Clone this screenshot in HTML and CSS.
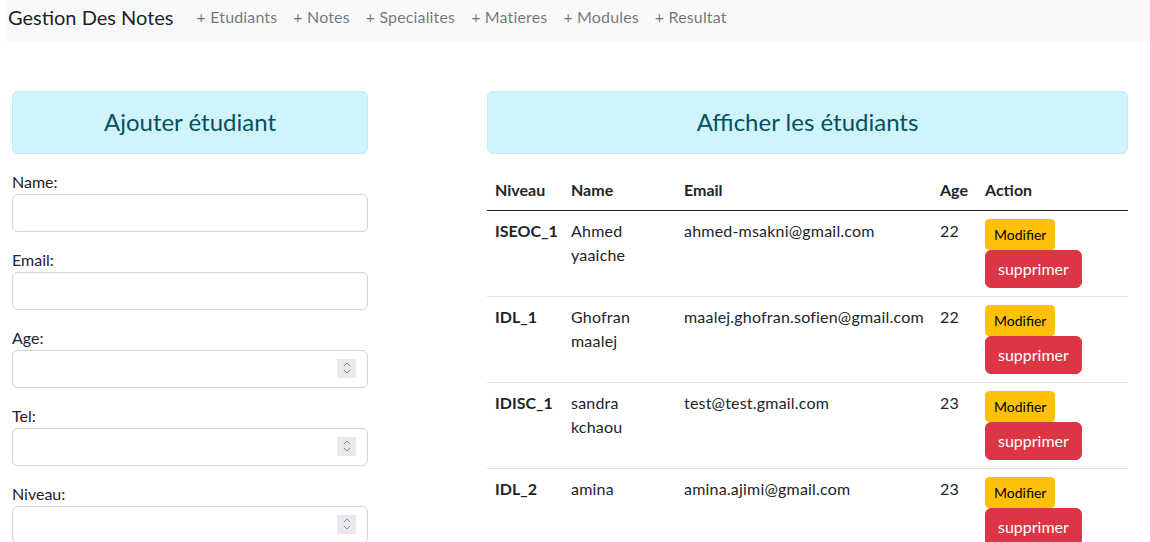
FILE: index.html
```html
<!DOCTYPE html>
<html lang="fr">
<head>
<meta charset="utf-8">
<title>Gestion Des Notes</title>
<link rel="stylesheet" href="styles.css">
</head>
<body>
<nav class="navbar">
  <span class="brand">Gestion Des Notes</span>
  <ul class="nav">
    <li><a href="#">+ Etudiants</a></li>
    <li><a href="#">+ Notes</a></li>
    <li><a href="#">+ Specialites</a></li>
    <li><a href="#">+ Matieres</a></li>
    <li><a href="#">+ Modules</a></li>
    <li><a href="#">+ Resultat</a></li>
  </ul>
</nav>

<main class="page">
  <section class="col-form">
    <div class="alert"><h3>Ajouter étudiant</h3></div>
    <form class="form">
      <div class="field">
        <label>Name:</label>
        <div class="input"><input type="text"></div>
      </div>
      <div class="field">
        <label>Email:</label>
        <div class="input"><input type="text"></div>
      </div>
      <div class="field">
        <label>Age:</label>
        <div class="input"><input type="number"><span class="spin"><svg width="10" height="14" viewBox="0 0 10 14"><path d="M2 5 L5 2 L8 5 M2 9 L5 12 L8 9" fill="none" stroke="#8a8a92" stroke-width="1"/></svg></span></div>
      </div>
      <div class="field">
        <label>Tel:</label>
        <div class="input"><input type="number"><span class="spin"><svg width="10" height="14" viewBox="0 0 10 14"><path d="M2 5 L5 2 L8 5 M2 9 L5 12 L8 9" fill="none" stroke="#8a8a92" stroke-width="1"/></svg></span></div>
      </div>
      <div class="field">
        <label>Niveau:</label>
        <div class="input"><input type="number"><span class="spin"><svg width="10" height="14" viewBox="0 0 10 14"><path d="M2 5 L5 2 L8 5 M2 9 L5 12 L8 9" fill="none" stroke="#8a8a92" stroke-width="1"/></svg></span></div>
      </div>
    </form>
  </section>

  <section class="col-list">
    <div class="alert"><h3>Afficher les étudiants</h3></div>
    <table class="table">
      <colgroup>
        <col class="c-niv"><col class="c-name"><col class="c-mail"><col class="c-age"><col class="c-act">
      </colgroup>
      <thead>
        <tr><th>Niveau</th><th>Name</th><th>Email</th><th>Age</th><th>Action</th></tr>
      </thead>
      <tbody>
        <tr>
          <th>ISEOC_1</th><td class="name">Ahmed yaaiche</td><td>ahmed-msakni@gmail.com</td><td>22</td>
          <td><div class="actions"><button class="btn btn-warning">Modifier</button><button class="btn btn-danger">supprimer</button></div></td>
        </tr>
        <tr>
          <th>IDL_1</th><td class="name">Ghofran maalej</td><td>maalej.ghofran.sofien@gmail.com</td><td>22</td>
          <td><div class="actions"><button class="btn btn-warning">Modifier</button><button class="btn btn-danger">supprimer</button></div></td>
        </tr>
        <tr>
          <th>IDISC_1</th><td class="name">sandra kchaou</td><td>test@test.gmail.com</td><td>23</td>
          <td><div class="actions"><button class="btn btn-warning">Modifier</button><button class="btn btn-danger">supprimer</button></div></td>
        </tr>
        <tr>
          <th>IDL_2</th><td class="name">amina</td><td>amina.ajimi@gmail.com</td><td>23</td>
          <td><div class="actions"><button class="btn btn-warning">Modifier</button><button class="btn btn-danger">supprimer</button></div></td>
        </tr>
      </tbody>
    </table>
  </section>
</main>
</body>
</html>
```

FILE: styles.css
```css
* { box-sizing: border-box; }
html, body { margin: 0; padding: 0; }
body {
  font-family: Lato, "Noto Sans", sans-serif;
  font-size: 16px;
  line-height: 24px;
  color: #212529;
  background: #fff;
  overflow: hidden;
}

.navbar {
  margin-left: 7px;
  height: 42px;
  background: #f8f9fa;
  display: flex;
  align-items: flex-start;
  padding: 2px 0 0 1px;
}
.brand {
  font-size: 20px;
  line-height: 30px;
  color: rgba(0, 0, 0, 0.9);
  margin-right: 15px;
}
.nav {
  list-style: none;
  margin: 0;
  padding: 3px 0 0 0;
  display: flex;
}
.nav a {
  display: block;
  padding: 0 8px;
  color: rgba(0, 0, 0, 0.55);
  text-decoration: none;
  letter-spacing: 0.15px;
}

.page {
  display: flex;
  padding: 49px 0 0 12px;
  gap: 119px;
}
.col-form { width: 356px; flex: none; }
.col-list { width: 641px; flex: none; }

.alert {
  background: #cff4fc;
  border: 1px solid #b6effb;
  border-radius: 6px;
  color: #055160;
  padding: 16px;
  margin-bottom: 16px;
  text-align: center;
}
.alert h3 {
  margin: 0;
  font-size: 24px;
  font-weight: 400;
  line-height: 28.8px;
}

.field { margin-bottom: 16px; }
.field label { display: block; line-height: 24px; }
.input { position: relative; }
.input input {
  display: block;
  width: 100%;
  height: 38px;
  border: 1px solid #ced4da;
  border-radius: 6px;
  padding: 6px 12px;
  font: inherit;
  background: #fff;
  -moz-appearance: textfield;
}
.input input::-webkit-inner-spin-button,
.input input::-webkit-outer-spin-button { -webkit-appearance: none; margin: 0; }
.spin {
  position: absolute;
  right: 12px;
  top: 9px;
  width: 19px;
  height: 19px;
  background: #e9e9ed;
  display: flex;
  align-items: center;
  justify-content: center;
}

.table {
  width: 641px;
  border-collapse: collapse;
  table-layout: fixed;
}
.c-niv { width: 76px; }
.c-name { width: 113px; }
.c-mail { width: 256px; }
.c-age { width: 45px; }
.c-act { width: 151px; }
.table th, .table td {
  padding: 8px;
  text-align: left;
  vertical-align: top;
  font-weight: 400;
}
.table th { font-weight: 700; }
.table tbody td { letter-spacing: 0.2px; }
.table thead th { border-bottom: 1px solid #212529; }
.table tbody tr { border-bottom: 1px solid #dee2e6; }
.table td.name { padding-right: 30px; }

.actions { display: flex; flex-direction: column; align-items: flex-start; }
.btn {
  font-family: inherit;
  border: 1px solid transparent;
  cursor: pointer;
  letter-spacing: 0;
}
.btn-warning {
  background: #ffc107;
  border-color: #ffc107;
  color: #000;
  font-size: 14px;
  line-height: 21px;
  padding: 4px 8px;
  border-radius: 4px;
}
.btn-danger {
  background: #dc3545;
  border-color: #dc3545;
  color: #fff;
  font-size: 16px;
  line-height: 24px;
  padding: 6px 12px;
  border-radius: 6px;
}
```
